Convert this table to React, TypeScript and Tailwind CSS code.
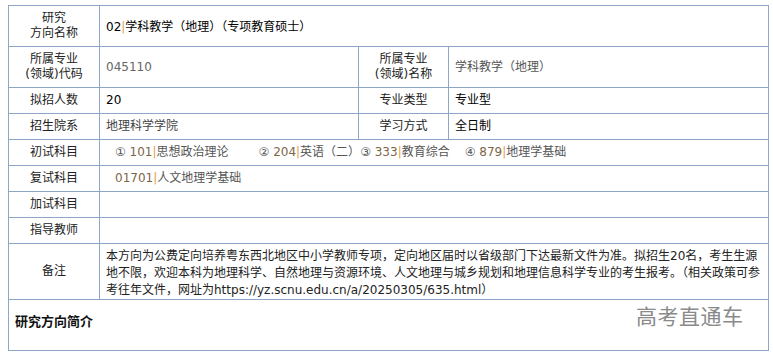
import React from "react";

const B = "border border-[#8ea6c8]";
const label = `${B} text-center align-middle text-[#222] px-1`;
const val = `${B} align-middle px-[6px]`;

function Course({ n, code, name, gap }: { n: string; code: string; name: string; gap: string }) {
  return (
    <span className={`${gap} text-[#555]`}>
      <span>{n}</span> <span className="text-[#7d6548]">{code}</span>
      <span className="text-[#e8a040]">|</span>
      <span>{name}</span>
    </span>
  );
}

export default function App() {
  return (
    <div
      className="relative w-[773px] h-[356px] bg-white text-[12px] leading-[15px]"
      style={{ fontFamily: '"DejaVu Sans", "Noto Sans CJK SC", sans-serif' }}
    >
      <div className="pt-[5px] pl-[8px]">
        <table className="border-collapse w-[760px] table-fixed">
          <colgroup>
            <col className="w-[91px]" />
            <col className="w-[259px]" />
            <col className="w-[90px]" />
            <col className="w-[320px]" />
          </colgroup>
          <tbody>
            <tr className="h-[41px]">
              <td className={label}>
                研究
                <br />
                方向名称
              </td>
              <td className={`${val} text-black pt-[3px]`} colSpan={3}>
                02<span className="text-[#e8a040]">|</span>学科教学（地理）（专项教育硕士）
              </td>
            </tr>
            <tr className="h-[41px]">
              <td className={label}>
                所属专业
                <br />
                (领域)代码
              </td>
              <td className={`${val} text-[#666]`}>045110</td>
              <td className={label}>
                所属专业
                <br />
                (领域)名称
              </td>
              <td className={`${val} text-[#555]`}>学科教学（地理）</td>
            </tr>
            <tr className="h-[26px]">
              <td className={label}>拟招人数</td>
              <td className={`${val} text-black`}>20</td>
              <td className={label}>专业类型</td>
              <td className={`${val} text-black`}>专业型</td>
            </tr>
            <tr className="h-[26px]">
              <td className={label}>招生院系</td>
              <td className={`${val} text-[#444]`}>地理科学学院</td>
              <td className={label}>学习方式</td>
              <td className={`${val} text-black`}>全日制</td>
            </tr>
            <tr className="h-[26px]">
              <td className={label}>初试科目</td>
              <td className={`${val} pl-[15px] whitespace-nowrap`} colSpan={3}>
                <Course n="①" code="101" name="思想政治理论" gap="mr-[30px]" />
                <Course n="②" code="204" name="英语（二）" gap="mr-0" />
                <Course n="③" code="333" name="教育综合" gap="mr-[15px]" />
                <Course n="④" code="879" name="地理学基础" gap="" />
              </td>
            </tr>
            <tr className="h-[26px]">
              <td className={label}>复试科目</td>
              <td className={`${val} pl-[15px] text-[#555]`} colSpan={3}>
                <span className="text-[#7d6548]">01701</span>
                <span className="text-[#e8a040]">|</span>人文地理学基础
              </td>
            </tr>
            <tr className="h-[26px]">
              <td className={label}>加试科目</td>
              <td className={val} colSpan={3}></td>
            </tr>
            <tr className="h-[26px]">
              <td className={label}>指导教师</td>
              <td className={val} colSpan={3}></td>
            </tr>
            <tr className="h-[56px]">
              <td className={label}>备注</td>
              <td className={`${val} leading-[17px] text-[#222] pt-[3px]`} colSpan={3}>
                本方向为公费定向培养粤东西北地区中小学教师专项，定向地区届时以省级部门下达最新文件为准。拟招生20名，考生生源地不限，欢迎本科为地理科学、自然地理与资源环境、人文地理与城乡规划和地理信息科学专业的考生报考。（相关政策可参考往年文件，网址为https://yz.scnu.edu.cn/a/20250305/635.html）
              </td>
            </tr>
            <tr className="h-[51px]">
              <td className={`${B} align-top pt-[14px] px-[6px] font-bold text-[13px] text-[#111]`} colSpan={4}>
                研究方向简介
              </td>
            </tr>
          </tbody>
        </table>
      </div>
      <div
        className="absolute left-[636px] top-[302px] text-[21px] leading-[26px] text-[#8a8a8a] tracking-[0.5px]"
        style={{ fontFamily: '"Noto Sans CJK SC", sans-serif' }}
      >
        高考直通车
      </div>
    </div>
  );
}
